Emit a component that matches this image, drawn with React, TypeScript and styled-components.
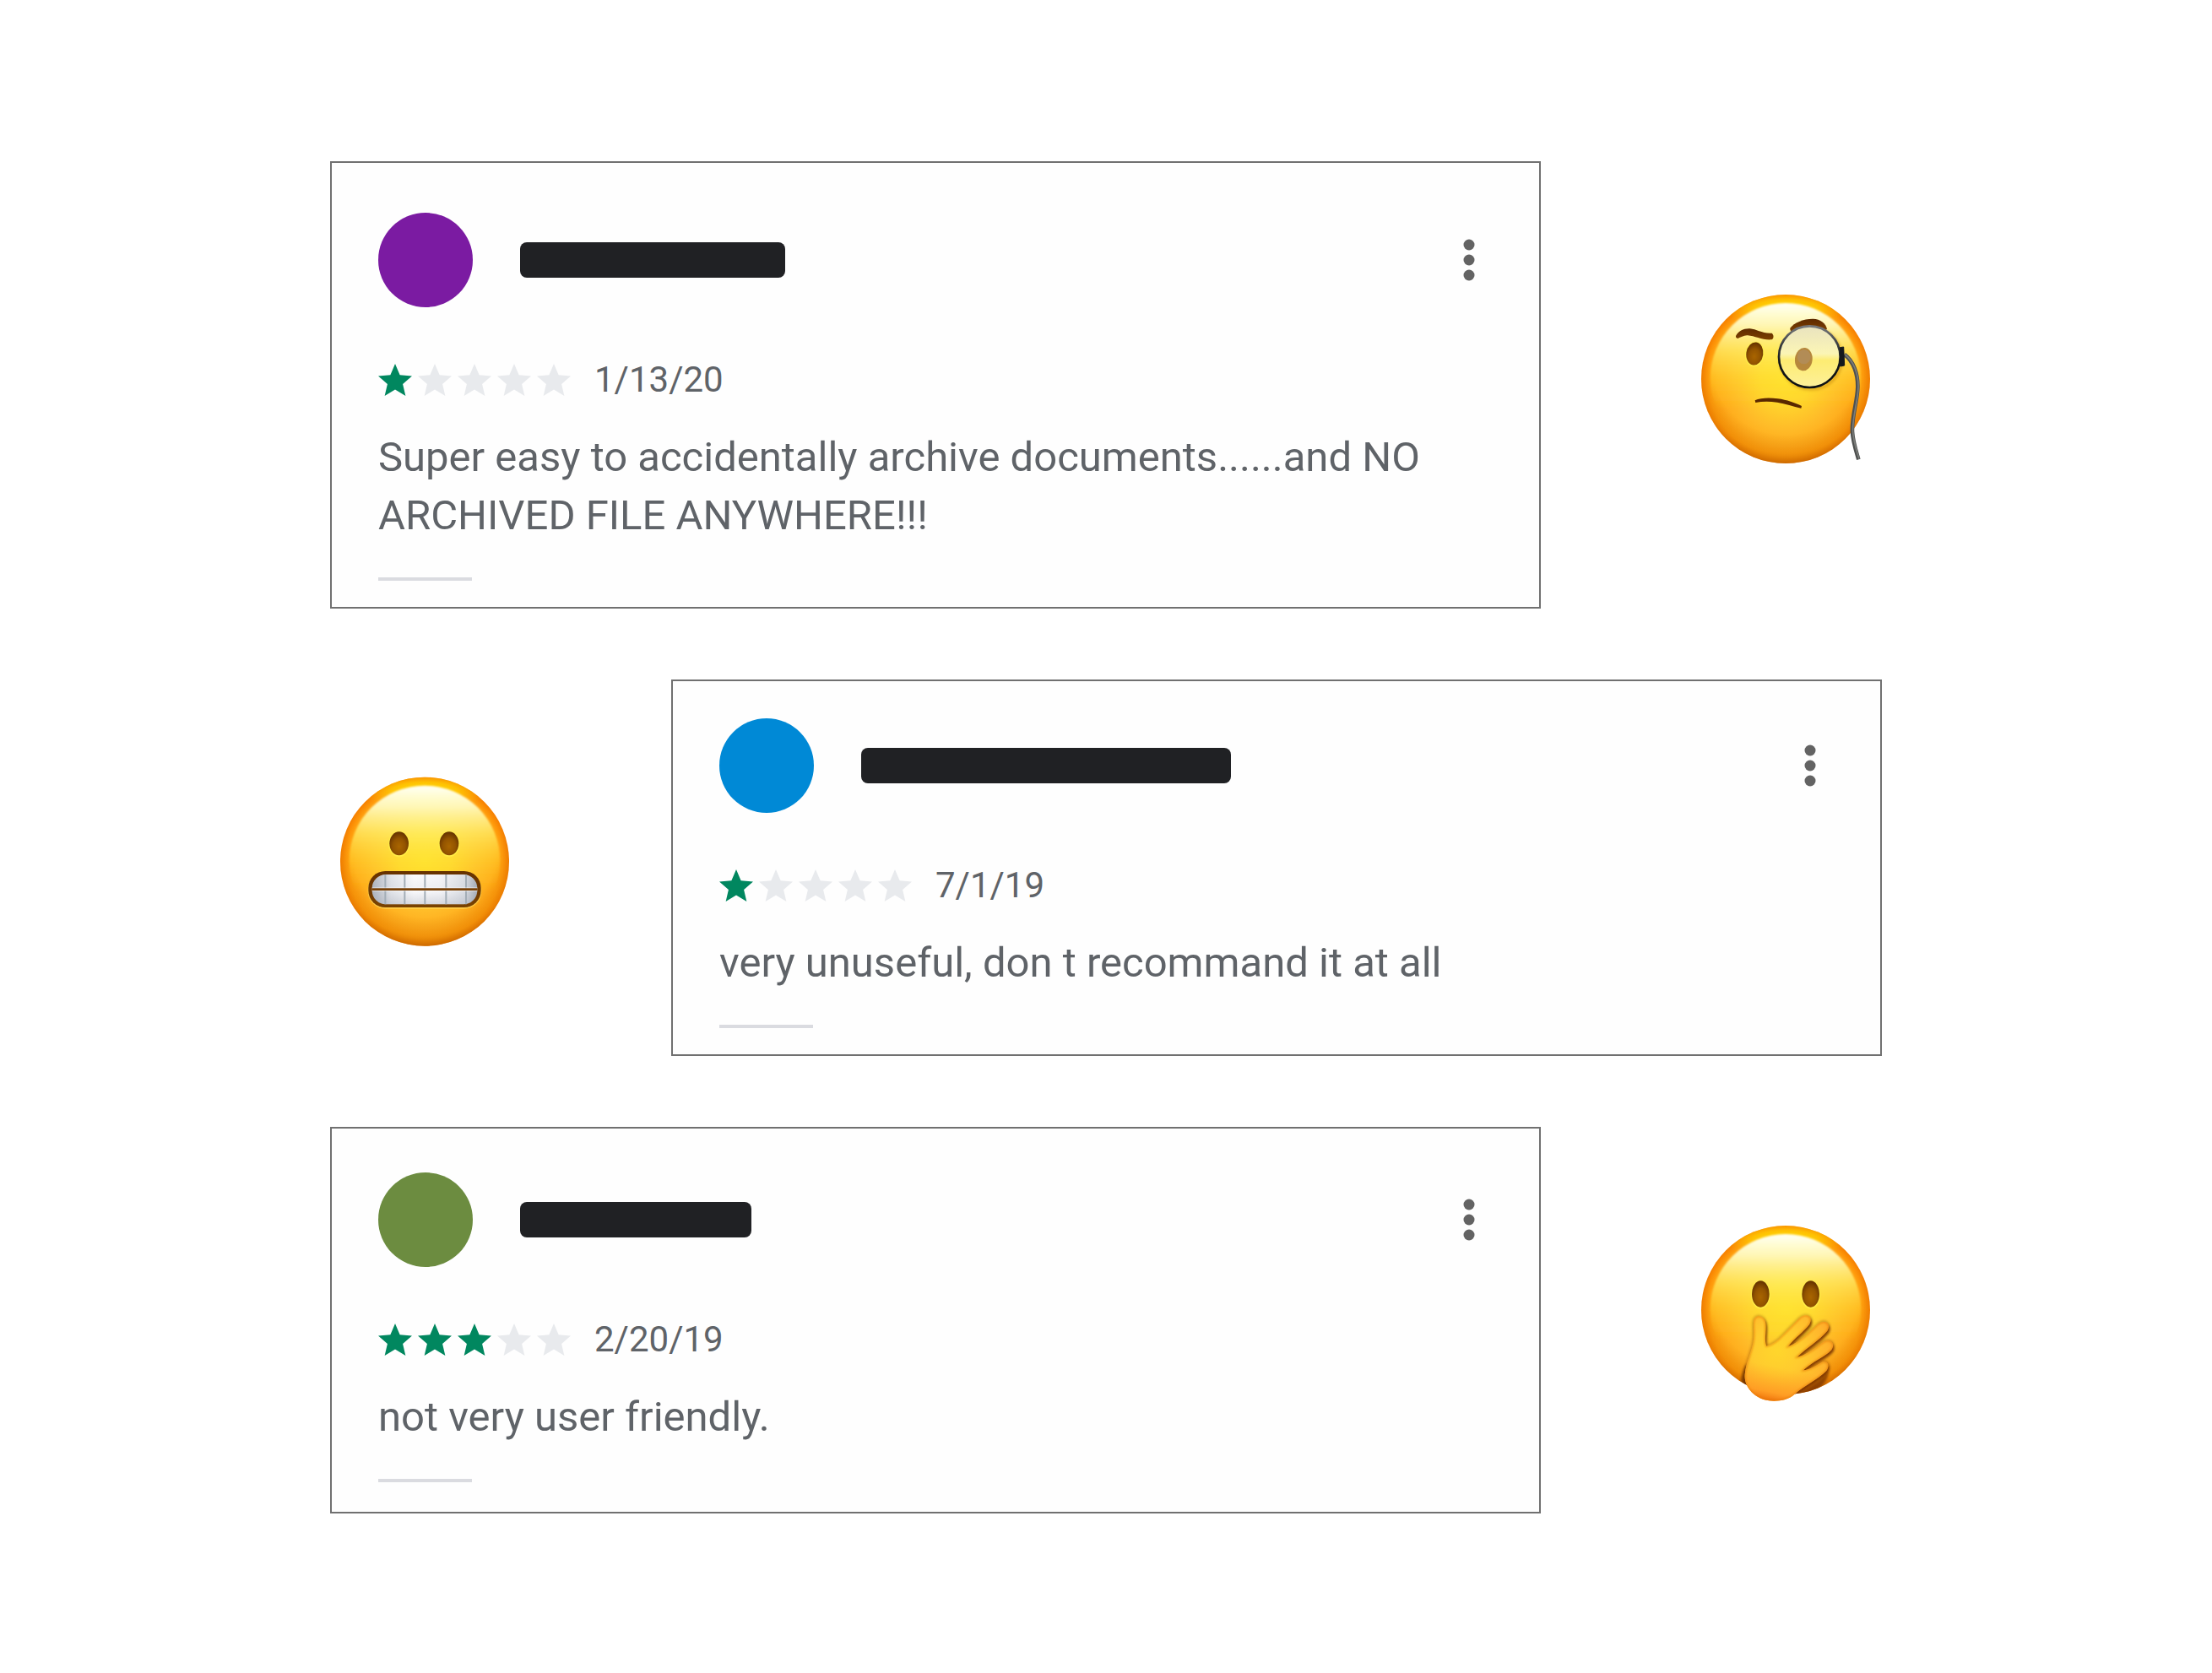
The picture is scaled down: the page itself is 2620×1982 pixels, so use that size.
import React from "react";
import styled, { createGlobalStyle } from "styled-components";

const GlobalStyle = createGlobalStyle`
  *, *::before, *::after { box-sizing: border-box; }
  body {
    margin: 0;
    background: #ffffff;
    color: #5f6368;
    font-family: Roboto, "Liberation Sans", sans-serif;
  }
`;

const Page = styled.main`
  display: flex;
  flex-direction: column;
  gap: 84px;
  max-width: 1838px;
  margin: 0 auto;
  padding: 191px 0;
`;

const ReviewRow = styled.section<{ $reverse: boolean }>`
  display: flex;
  flex-direction: ${(p) => (p.$reverse ? "row-reverse" : "row")};
  align-items: center;
  gap: 178px;
`;

const Card = styled.article<{ $top: number; $bottom: number }>`
  flex: 1;
  min-width: 0;
  padding: ${(p) => p.$top}px 55px ${(p) => p.$bottom}px;
  border: 2px solid #707070;
  background: #fefefe;
`;

const CardHeader = styled.header`
  display: flex;
  align-items: center;
  gap: 56px;
`;

const Avatar = styled.span<{ $color: string }>`
  flex: none;
  width: 112px;
  height: 112px;
  border-radius: 50%;
  background: ${(p) => p.$color};
`;

const RedactedName = styled.span<{ $width: number }>`
  width: ${(p) => p.$width}px;
  height: 42px;
  border-radius: 8px;
  background: #202124;
`;

const MenuButton = styled.button`
  display: flex;
  align-items: center;
  justify-content: center;
  width: 56px;
  height: 64px;
  margin-left: auto;
  padding: 0;
  border: 0;
  background: transparent;
  color: #636363;
  cursor: pointer;
`;

const RatingRow = styled.div`
  display: flex;
  align-items: center;
  gap: 28px;
  height: 48px;
  margin-top: 62px;
`;

const Stars = styled.div`
  display: flex;
  gap: 7px;
`;

const StarIcon = styled.svg<{ $filled: boolean }>`
  width: 40px;
  height: 38px;
  fill: ${(p) => (p.$filled ? "#01875f" : "#e8eaed")};
`;

const ReviewDate = styled.time`
  font-size: 42px;
  line-height: 48px;
`;

const ReviewText = styled.p`
  margin: 33px 0 39px;
  font-size: 49px;
  line-height: 69px;
`;

const Rule = styled.hr`
  width: 111px;
  height: 4px;
  margin: 0;
  border: 0;
  background: #dadbe0;
`;

const EmojiArt = styled.svg`
  flex: none;
  display: block;
  width: 226px;
`;

function FaceBase({ id, cx, cy }: { id: string; cx: number; cy: number }) {
  return (
    <>
      <defs>
        <radialGradient id={`${id}-base`} gradientUnits="userSpaceOnUse" cx={cx} cy={cy} r={300}>
          <stop offset="0" stopColor="#ffdf2d" />
          <stop offset="0.3" stopColor="#ffd52d" />
          <stop offset="0.6" stopColor="#ffbb28" />
          <stop offset="0.8" stopColor="#ffab1b" />
          <stop offset="0.92" stopColor="#ff9c0c" />
          <stop offset="1" stopColor="#f67f00" />
        </radialGradient>
        <radialGradient id={`${id}-shade`} gradientUnits="userSpaceOnUse" cx={cx} cy={cy - 70} r={372}>
          <stop offset="0.72" stopColor="#c86c00" stopOpacity="0" />
          <stop offset="0.9" stopColor="#d47600" stopOpacity="0.32" />
          <stop offset="1" stopColor="#b85f00" stopOpacity="0.7" />
        </radialGradient>
        <radialGradient
          id={`${id}-rim`}
          gradientUnits="userSpaceOnUse"
          cx="0"
          cy="0"
          r="1"
          gradientTransform={`translate(${cx} ${cy - 250}) scale(230 64)`}
        >
          <stop offset="0" stopColor="#ffe000" />
          <stop offset="0.5" stopColor="#ffd000" stopOpacity="0.75" />
          <stop offset="1" stopColor="#ffb400" stopOpacity="0" />
        </radialGradient>
        <linearGradient id={`${id}-shine`} x1="0" y1="0" x2="0" y2="1">
          <stop offset="0" stopColor="#fffff4" />
          <stop offset="0.14" stopColor="#fffdc4" stopOpacity="0.92" />
          <stop offset="0.32" stopColor="#fff56c" stopOpacity="0.68" />
          <stop offset="0.5" stopColor="#ffe93a" stopOpacity="0.35" />
          <stop offset="0.7" stopColor="#ffdd20" stopOpacity="0" />
        </linearGradient>
        <filter id={`${id}-soft`} x="-10%" y="-10%" width="120%" height="120%">
          <feGaussianBlur stdDeviation="3" />
        </filter>
      </defs>
      <circle cx={cx} cy={cy} r="300" fill={`url(#${id}-base)`} />
      <circle cx={cx} cy={cy} r="300" fill={`url(#${id}-shade)`} />
      <circle cx={cx} cy={cy} r="300" fill={`url(#${id}-rim)`} />
      <ellipse
        cx={cx}
        cy={cy - 2}
        rx="268"
        ry="268"
        fill={`url(#${id}-shine)`}
        filter={`url(#${id}-soft)`}
      />
    </>
  );
}

function Eye({ id, cx, cy, rx, ry, tilt = 0 }: { id: string; cx: number; cy: number; rx: number; ry: number; tilt?: number }) {
  return (
    <g transform={`rotate(${tilt} ${cx} ${cy})`}>
      <defs>
        <radialGradient id={id} cx="0.5" cy="0.62" r="0.6">
          <stop offset="0" stopColor="#a96500" />
          <stop offset="0.55" stopColor="#935400" />
          <stop offset="1" stopColor="#653200" />
        </radialGradient>
      </defs>
      <ellipse cx={cx} cy={cy + 2} rx={rx + 4} ry={ry + 4} fill="#fff04a" opacity="0.7" />
      <ellipse cx={cx} cy={cy} rx={rx} ry={ry} fill={`url(#${id})`} />
    </g>
  );
}

function MonocleEmoji() {
  return (
    <EmojiArt viewBox="39 18 678 720" role="img" aria-label="Face with monocle">
      <defs>
        <linearGradient id="lens" x1="0" y1="0" x2="0" y2="1">
          <stop offset="0" stopColor="#e9e3bf" />
          <stop offset="0.45" stopColor="#fbf5b5" />
          <stop offset="0.56" stopColor="#fdec72" />
          <stop offset="1" stopColor="#fdf09a" />
        </linearGradient>
        <linearGradient id="frame" x1="0" y1="0" x2="0" y2="1">
          <stop offset="0" stopColor="#77797c" />
          <stop offset="0.3" stopColor="#3a3d40" />
          <stop offset="0.6" stopColor="#111417" />
          <stop offset="1" stopColor="#0d1114" />
        </linearGradient>
        <linearGradient id="brow" x1="0" y1="0" x2="0" y2="1">
          <stop offset="0" stopColor="#5e2a00" />
          <stop offset="1" stopColor="#7d4000" />
        </linearGradient>
        <filter id="lens-shadow" x="-20%" y="-20%" width="140%" height="140%">
          <feGaussianBlur stdDeviation="5" />
        </filter>
      </defs>
      <FaceBase id="monocle" cx={375} cy={357} />
      <path
        d="M198 204C207 186 226 177 248 178C272 180 291 196 326 194C334 201 333 213 326 217C293 220 267 204 240 202C226 201 216 209 205 213C199 212 197 208 198 204Z"
        fill="url(#brow)"
      />
      <path
        d="M391 176C405 157 437 143 472 143C499 144 518 159 522 180L508 188L398 190C392 187 390 181 391 176Z"
        fill="url(#brow)"
      />
      <Eye id="monocle-eye" cx={265} cy={267} rx={30} ry={41} tilt={8} />
      <path
        d="M266 433C285 424 317 423 347 427C379 431 409 442 432 453L430 461C401 454 375 445 345 440C317 436 292 436 268 441Z"
        fill="#5a2700"
      />
      <circle cx="465" cy="284" r="110" fill="none" stroke="#b06c00" strokeOpacity="0.4" strokeWidth="9" filter="url(#lens-shadow)" />
      <circle cx="460" cy="278" r="108" fill="url(#lens)" />
      <ellipse cx="439" cy="287" rx="31" ry="41" fill="#b6873c" transform="rotate(7 439 287)" />
      <ellipse cx="440" cy="278" rx="24" ry="26" fill="#b18d5c" opacity="0.8" />
      <circle cx="460" cy="278" r="109" fill="none" stroke="url(#frame)" strokeWidth="8" />
      <path d="M584 270C616 293 632 340 631 386C630 440 609 490 612 545C614 580 626 615 634 643" fill="none" stroke="#4e504f" strokeWidth="14" />
      <path d="M586 270C618 295 634 340 633 386C632 440 611 490 614 545C616 580 628 615 636 641" fill="none" stroke="#7b7d7a" strokeWidth="5" />
      <path d="M568 245L581 243L584 309L569 312Z" fill="#15181c" stroke="#15181c" strokeWidth="3" strokeLinejoin="round" />
    </EmojiArt>
  );
}

function GrimaceEmoji() {
  return (
    <EmojiArt viewBox="33 24 678 720" role="img" aria-label="Grimacing face">
      <defs>
        <linearGradient id="teeth" x1="0" y1="0" x2="1" y2="0">
          <stop offset="0" stopColor="#aeb4bd" />
          <stop offset="0.18" stopColor="#e2e4e9" />
          <stop offset="0.4" stopColor="#fbfbfd" />
          <stop offset="0.65" stopColor="#f6f6f9" />
          <stop offset="0.88" stopColor="#dcdfe5" />
          <stop offset="1" stopColor="#a6acb6" />
        </linearGradient>
        <linearGradient id="teeth-shade" x1="0" y1="0" x2="0" y2="1">
          <stop offset="0" stopColor="#9ba1ae" stopOpacity="0" />
          <stop offset="0.45" stopColor="#9ba1ae" stopOpacity="0.1" />
          <stop offset="0.55" stopColor="#9ba1ae" stopOpacity="0.02" />
          <stop offset="1" stopColor="#8f96a4" stopOpacity="0.32" />
        </linearGradient>
        <linearGradient id="lips" x1="0" y1="0" x2="0" y2="1">
          <stop offset="0" stopColor="#673200" />
          <stop offset="1" stopColor="#7a4200" />
        </linearGradient>
      </defs>
      <FaceBase id="grimace" cx={369} cy={362} />
      <Eye id="grimace-left" cx={278} cy={298} rx={34} ry={42} />
      <Eye id="grimace-right" cx={456} cy={298} rx={34} ry={42} />
      <rect x="167" y="398" width="404" height="132" rx="62" fill="#ffd95a" opacity="0.7" />
      <rect x="169" y="396" width="400" height="129" rx="60" fill="url(#lips)" />
      <rect x="182" y="408" width="374" height="106" rx="49" fill="url(#teeth)" />
      <rect x="182" y="408" width="374" height="106" rx="49" fill="url(#teeth-shade)" />
      <path d="M229 409V514M298 408V514M370 408V514M445 408V514M516 409V514" stroke="#a3adb6" strokeWidth="6" />
      <path d="M182 461H556" stroke="#fff" strokeOpacity="0.7" strokeWidth="13" />
      <path d="M181 461H557" stroke="#774108" strokeWidth="8" />
    </EmojiArt>
  );
}

const HAND_PATH =
  "M261 409C262 380 300 380 304 414C307 440 298 475 307 494C330 490 350 472 366 454L422 397C445 373 477 388 459 418C438 444 407 466 384 495C404 490 436 467 454 450L489 417C513 396 540 414 523 440C498 471 448 501 416 533C442 529 479 503 504 483C530 463 555 484 538 508C516 532 469 550 438 580C459 578 483 564 499 554C520 541 536 559 520 582C489 613 443 633 407 665C380 690 332 693 300 685C250 669 227 629 230 595C234 549 256 513 261 471C263 447 260 426 261 409Z";

function HandOverMouthEmoji() {
  return (
    <EmojiArt viewBox="39 27 678 750" role="img" aria-label="Face with hand over mouth">
      <defs>
        <radialGradient id="hand" gradientUnits="userSpaceOnUse" cx="345" cy="510" r="220">
          <stop offset="0" stopColor="#ffd62c" />
          <stop offset="0.4" stopColor="#ffcb2e" />
          <stop offset="0.8" stopColor="#ffb42c" />
          <stop offset="1" stopColor="#ffa024" />
        </radialGradient>
        <linearGradient id="palm" gradientUnits="userSpaceOnUse" x1="355" y1="570" x2="330" y2="690">
          <stop offset="0" stopColor="#ff9c22" stopOpacity="0" />
          <stop offset="0.75" stopColor="#ff9020" stopOpacity="0.65" />
          <stop offset="1" stopColor="#ee740c" />
        </linearGradient>
        <clipPath id="hand-face">
          <circle cx="375" cy="366" r="300" />
        </clipPath>
        <clipPath id="hand-shape">
          <path d={HAND_PATH} />
        </clipPath>
        <filter id="hand-shadow" x="-20%" y="-20%" width="140%" height="140%">
          <feGaussianBlur stdDeviation="5" />
        </filter>
        <filter id="hand-edge" x="-20%" y="-20%" width="140%" height="140%">
          <feGaussianBlur stdDeviation="3" />
        </filter>
      </defs>
      <FaceBase id="gasp" cx={375} cy={366} />
      <Eye id="gasp-left" cx={286} cy={309} rx={31} ry={47} />
      <Eye id="gasp-right" cx={464} cy={309} rx={31} ry={47} />
      <g clipPath="url(#hand-face)">
        <path d={HAND_PATH} fill="#6e2c00" opacity="0.85" transform="translate(4 9)" filter="url(#hand-shadow)" />
        <path d={HAND_PATH} fill="none" stroke="#8a4200" strokeWidth="7" opacity="0.45" filter="url(#hand-shadow)" />
        <path d="M234 560C218 590 212 620 222 650L245 650L240 560Z" fill="#5c2600" opacity="0.75" filter="url(#hand-shadow)" />
        <path d="M528 584C500 618 445 645 400 682L440 682C490 655 525 625 528 584Z" fill="#6e2c00" opacity="0.7" filter="url(#hand-shadow)" />
      </g>
      <path d={HAND_PATH} fill="url(#hand)" />
      <path d={HAND_PATH} fill="url(#palm)" />
      <g clipPath="url(#hand-shape)">
        <path d={HAND_PATH} fill="none" stroke="#e67c08" strokeWidth="7" opacity="0.65" filter="url(#hand-edge)" />
      </g>
    </EmojiArt>
  );
}

function StarRating({ value }: { value: number }) {
  return (
    <Stars role="img" aria-label={`Rated ${value} out of 5`}>
      {[1, 2, 3, 4, 5].map((n) => (
        <StarIcon key={n} $filled={n <= value} viewBox="2 2 20 19" aria-hidden="true">
          <path d="M12 17.27L18.18 21l-1.64-7.03L22 9.24l-7.19-.61L12 2 9.19 8.63 2 9.24l5.46 4.73L5.82 21z" />
        </StarIcon>
      ))}
    </Stars>
  );
}

type Review = {
  color: string;
  nameWidth: number;
  rating: number;
  date: string;
  isoDate: string;
  text: string;
  top: number;
  bottom: number;
  reverse: boolean;
  Emoji: () => React.JSX.Element;
};

const reviews: Review[] = [
  {
    color: "#7b1ba2",
    nameWidth: 314,
    rating: 1,
    date: "1/13/20",
    isoDate: "2020-01-13",
    text: "Super easy to accidentally archive documents......and NO ARCHIVED FILE ANYWHERE!!!",
    top: 59,
    bottom: 31,
    reverse: false,
    Emoji: MonocleEmoji,
  },
  {
    color: "#0089d6",
    nameWidth: 438,
    rating: 1,
    date: "7/1/19",
    isoDate: "2019-07-01",
    text: "very unuseful, don t recommand it at all",
    top: 44,
    bottom: 31,
    reverse: true,
    Emoji: GrimaceEmoji,
  },
  {
    color: "#6c8c40",
    nameWidth: 274,
    rating: 3,
    date: "2/20/19",
    isoDate: "2019-02-20",
    text: "not very user friendly.",
    top: 52,
    bottom: 35,
    reverse: false,
    Emoji: HandOverMouthEmoji,
  },
];

export default function App() {
  return (
    <>
      <GlobalStyle />
      <Page>
        {reviews.map(({ Emoji, ...review }) => (
          <ReviewRow key={review.isoDate} $reverse={review.reverse}>
            <Card $top={review.top} $bottom={review.bottom}>
              <CardHeader>
                <Avatar $color={review.color} />
                <RedactedName $width={review.nameWidth} />
                <MenuButton type="button" aria-label="Review options">
                  <svg width="14" height="50" viewBox="0 0 14 50" fill="currentColor" aria-hidden="true">
                    <circle cx="7" cy="7" r="6.5" />
                    <circle cx="7" cy="25" r="6.5" />
                    <circle cx="7" cy="43" r="6.5" />
                  </svg>
                </MenuButton>
              </CardHeader>
              <RatingRow>
                <StarRating value={review.rating} />
                <ReviewDate dateTime={review.isoDate}>{review.date}</ReviewDate>
              </RatingRow>
              <ReviewText>{review.text}</ReviewText>
              <Rule />
            </Card>
            <Emoji />
          </ReviewRow>
        ))}
      </Page>
    </>
  );
}
